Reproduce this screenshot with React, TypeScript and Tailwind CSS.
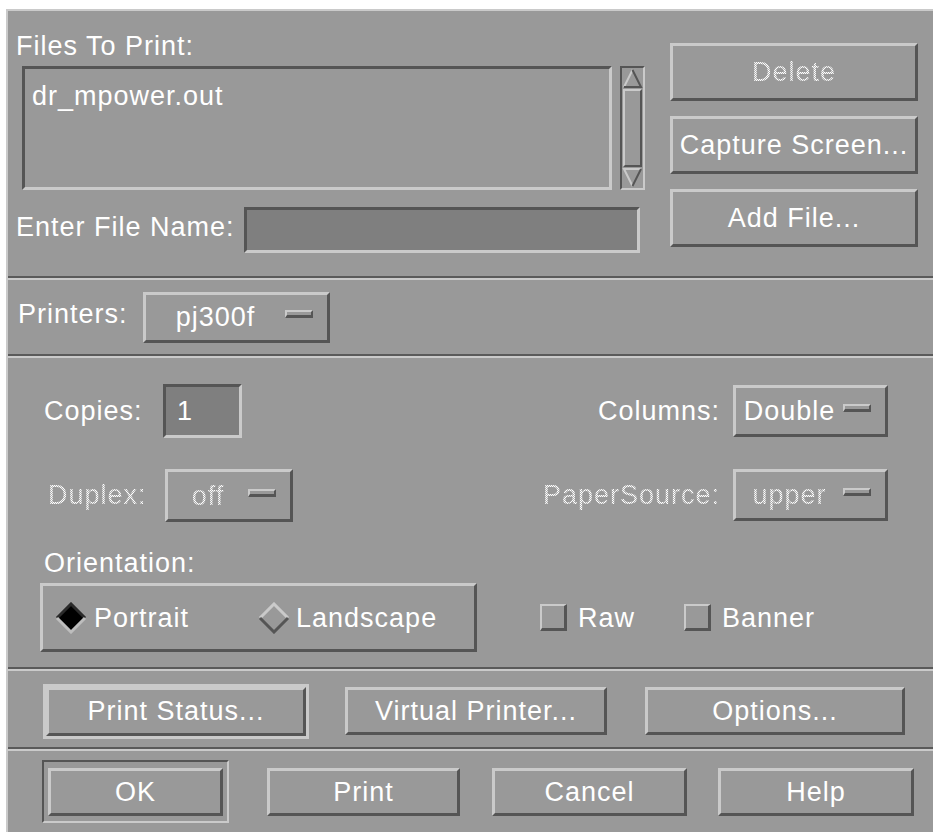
import React from "react";

// Motif-style bevels: light top/left + dark bottom/right (raised), or the reverse (sunken)
const raised =
  "border-[3px] border-t-[#cacaca] border-l-[#cacaca] border-b-[#555555] border-r-[#555555]";
const sunken =
  "border-[3px] border-t-[#555555] border-l-[#555555] border-b-[#cacaca] border-r-[#cacaca]";

function Stipple({ children }: { children: React.ReactNode }) {
  return (
    <span className="bg-[image:repeating-conic-gradient(#ffffff_0_25%,#b4b4b4_0_50%)] bg-[length:2px_2px] bg-clip-text text-transparent">
      {children}
    </span>
  );
}

function Button({
  children,
  className,
}: {
  children: React.ReactNode;
  className: string;
}) {
  return (
    <div className={`${raised} ${className} flex shrink-0 items-center justify-center bg-[#999999]`}>
      <span className="whitespace-nowrap">{children}</span>
    </div>
  );
}

function Indicator() {
  return (
    <div className="h-[8px] w-[28px] shrink-0 border-t-2 border-l-2 border-b-[3px] border-r-2 border-t-[#cacaca] border-l-[#cacaca] border-b-[#555555] border-r-[#555555] bg-[#999999]" />
  );
}

function OptionMenu({
  children,
  className,
}: {
  children: React.ReactNode;
  className: string;
}) {
  return (
    <div className={`${raised} ${className} flex shrink-0 items-center bg-[#999999]`}>
      <span className="flex-1 whitespace-nowrap text-center">{children}</span>
      <div className="mr-[14px] mb-[6px]">
        <Indicator />
      </div>
    </div>
  );
}

function Diamond({ on }: { on: boolean }) {
  const upper = on ? "#2a2a2a" : "#cacaca";
  const lower = on ? "#bdbdbd" : "#555555";
  return (
    <svg width="32" height="32" viewBox="0 0 32 32" className="shrink-0">
      <polygon points="16,2 30,16 16,30 2,16" fill={on ? "#000000" : "#999999"} />
      <polyline points="2,16 16,2 30,16" fill="none" stroke={upper} strokeWidth="3" />
      <polyline points="2,16 16,30 30,16" fill="none" stroke={lower} strokeWidth="3" />
    </svg>
  );
}

function CheckBox() {
  return (
    <div className="h-[27px] w-[27px] shrink-0 border-t-2 border-l-2 border-b-[3px] border-r-[3px] border-t-[#cacaca] border-l-[#cacaca] border-b-[#555555] border-r-[#555555] bg-[#999999]" />
  );
}

function ScrollBar() {
  return (
    <div className="flex h-[124px] w-[25px] shrink-0 flex-col border-[2px] border-t-[#555555] border-l-[#555555] border-b-[#cacaca] border-r-[#cacaca] bg-[#999999]">
      <svg width="21" height="21" viewBox="0 0 21 21" className="shrink-0">
        <polygon points="10.5,2 19,19 2,19" fill="#999999" />
        <polyline points="2,19 10.5,2" fill="none" stroke="#cacaca" strokeWidth="2" />
        <polyline points="10.5,2 19,19 2,19" fill="none" stroke="#555555" strokeWidth="2" />
      </svg>
      <div className="mx-[1px] flex-1 border-2 border-t-[#cacaca] border-l-[#cacaca] border-b-[#555555] border-r-[#555555]" />
      <svg width="21" height="21" viewBox="0 0 21 21" className="shrink-0">
        <polygon points="2,2 19,2 10.5,19" fill="#999999" />
        <polyline points="10.5,19 2,2 19,2" fill="none" stroke="#cacaca" strokeWidth="2" />
        <polyline points="19,2 10.5,19" fill="none" stroke="#555555" strokeWidth="2" />
      </svg>
    </div>
  );
}

function Separator() {
  return (
    <div className="shrink-0">
      <div className="h-[2px] bg-[#5a5a5a]" />
      <div className="h-[2px] bg-[#cacaca]" />
    </div>
  );
}

export default function App() {
  return (
    <div className="h-[832px] w-[933px] overflow-hidden bg-white pl-[6px] pt-[9px] font-['Liberation_Sans',Arial,sans-serif] text-[27px] leading-[30px] tracking-[1px] text-white">
      <div className="flex h-[823px] flex-col border-t-2 border-l-2 border-[#cacaca] bg-[#999999]">
        {/* Files list */}
        <div className="flex h-[265px] shrink-0">
          <div className="flex w-[637px] flex-col pl-[8px] pt-[20px]">
            <div className="h-[30px]">Files To Print:</div>
            <div className="ml-[6px] mt-[5px] flex gap-[8px]">
              <div className={`${sunken} h-[124px] w-[590px] bg-[#999999] pl-[7px] pt-[12px]`}>
                dr_mpower.out
              </div>
              <ScrollBar />
            </div>
            <div className="mt-[17px] flex h-[46px] items-center">
              <div className="w-[228px] pb-[6px]">Enter File Name:</div>
              <div className={`${sunken} h-[46px] w-[396px] bg-[#7f7f7f]`} />
            </div>
          </div>
          <div className="ml-[25px] flex w-[248px] flex-col gap-[15px] pt-[32px]">
            <Button className="h-[58px] w-[248px]">
              <Stipple>Delete</Stipple>
            </Button>
            <Button className="h-[58px] w-[248px]">Capture Screen...</Button>
            <Button className="h-[58px] w-[248px]">Add File...</Button>
          </div>
        </div>
        <Separator />

        {/* Printer selection */}
        <div className="flex h-[74px] shrink-0 items-center pl-[10px]">
          <div className="w-[125px] pb-[6px]">Printers:</div>
          <OptionMenu className="h-[51px] w-[187px]">pj300f</OptionMenu>
        </div>
        <Separator />

        {/* Print settings */}
        <div className="flex h-[309px] shrink-0 flex-col pl-[32px] pr-[45px] pt-[26px]">
          <div className="flex h-[54px] items-center justify-between">
            <div className="flex items-center">
              <div className="w-[123px] pl-[4px]">Copies:</div>
              <div className={`${sunken} flex h-[54px] w-[79px] items-center bg-[#7f7f7f] pl-[11px]`}>1</div>
            </div>
            <div className="flex items-center gap-[13px]">
              <span>Columns:</span>
              <OptionMenu className="h-[52px] w-[155px]">Double</OptionMenu>
            </div>
          </div>
          <div className="mt-[29px] flex h-[55px] items-center justify-between">
            <div className="flex items-center">
              <div className="w-[125px] pl-[8px]">
                <Stipple>Duplex:</Stipple>
              </div>
              <OptionMenu className="mt-[2px] h-[53px] w-[128px]">
                <Stipple>off</Stipple>
              </OptionMenu>
            </div>
            <div className="flex items-center gap-[13px]">
              <Stipple>PaperSource:</Stipple>
              <OptionMenu className="h-[52px] w-[155px]">
                <Stipple>upper</Stipple>
              </OptionMenu>
            </div>
          </div>
          <div className="mt-[26px] h-[30px] pl-[4px]">Orientation:</div>
          <div className="mt-[5px] flex items-center">
            <div className={`${raised} flex h-[69px] w-[437px] items-center pl-[12px]`}>
              <Diamond on />
              <span className="ml-[7px]">Portrait</span>
              <div className="ml-[69px]">
                <Diamond on={false} />
              </div>
              <span className="ml-[6px]">Landscape</span>
            </div>
            <div className="ml-[63px] flex items-center">
              <CheckBox />
              <span className="ml-[11px]">Raw</span>
            </div>
            <div className="ml-[49px] flex items-center">
              <CheckBox />
              <span className="ml-[11px]">Banner</span>
            </div>
          </div>
        </div>
        <Separator />

        {/* Auxiliary dialogs */}
        <div className="flex h-[76px] shrink-0 items-center pl-[35px] pt-[4px]">
          <div className="h-[55px] w-[266px] shrink-0 border-[3px] border-[#cacaca]">
            <Button className="h-[49px] w-[260px]">Print Status...</Button>
          </div>
          <Button className="ml-[36px] h-[48px] w-[262px]">Virtual Printer...</Button>
          <Button className="ml-[38px] h-[48px] w-[260px]">Options...</Button>
        </div>
        <Separator />

        {/* Dialog actions */}
        <div className="flex flex-1 items-center pl-[34px]">
          <div className="flex h-[63px] w-[187px] shrink-0 items-center justify-center border-2 border-t-[#555555] border-l-[#555555] border-b-[#cacaca] border-r-[#cacaca]">
            <Button className="h-[48px] w-[175px]">OK</Button>
          </div>
          <Button className="ml-[38px] h-[48px] w-[193px]">Print</Button>
          <Button className="ml-[32px] h-[48px] w-[195px]">Cancel</Button>
          <Button className="ml-[31px] h-[48px] w-[196px]">Help</Button>
        </div>
      </div>
    </div>
  );
}
